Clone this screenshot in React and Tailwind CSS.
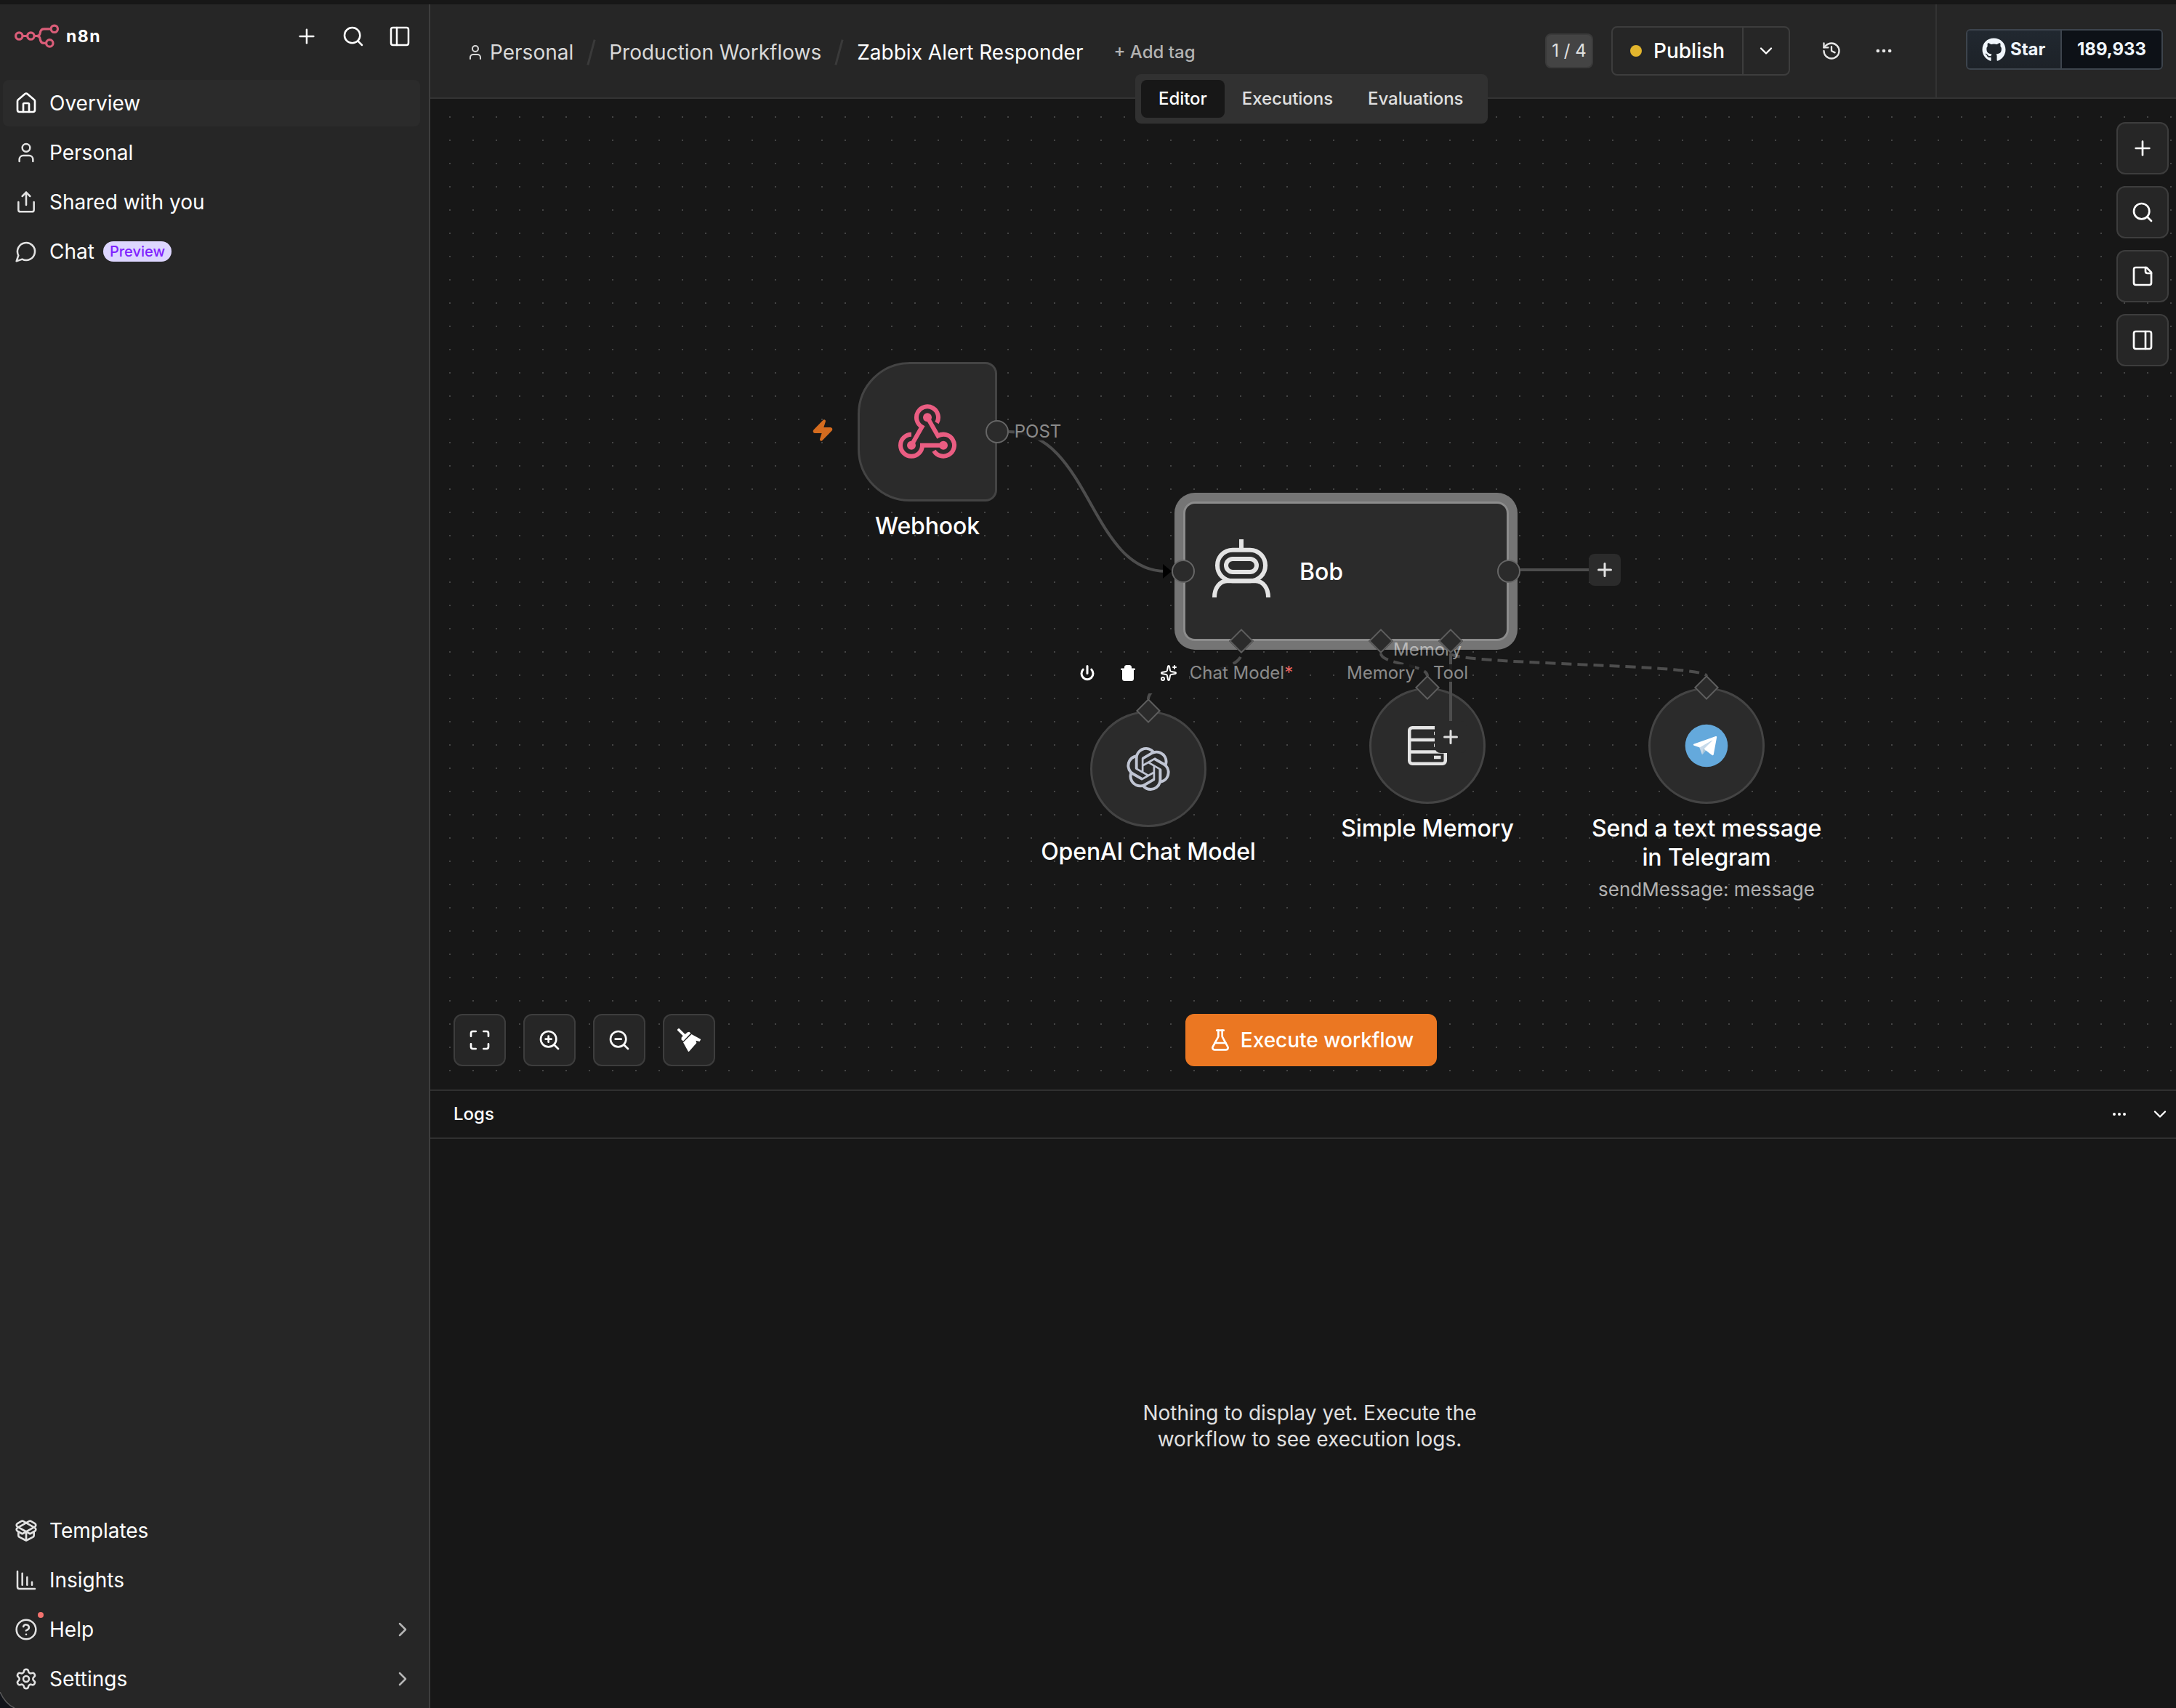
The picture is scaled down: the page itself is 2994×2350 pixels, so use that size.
import React from 'react';
import {
  Plus,
  Search,
  PanelLeft,
  PanelRight,
  House,
  User,
  Share,
  PackageOpen,
  ChartColumnDecreasing,
  CircleQuestionMark,
  Settings,
  ChevronRight,
  ChevronDown,
  History,
  Ellipsis,
  Maximize,
  ZoomIn,
  ZoomOut,
  FlaskConical,
  Sparkles,
} from 'lucide-react';
import { FaGithub } from 'react-icons/fa';
import { SiOpenai } from 'react-icons/si';

function Logo() {
  return (
    <svg width="62" height="34" viewBox="0 0 62 34" fill="none" stroke="#d95d78" strokeWidth="3.2">
      <circle cx="6.3" cy="16.5" r="4.7" />
      <circle cx="22.4" cy="16.5" r="4.7" />
      <circle cx="54.8" cy="6.8" r="4.7" />
      <circle cx="48.3" cy="26.4" r="4.7" />
      <path d="M11 16.5h6.7M27 16.5h3.2c3 0 4.6-1.4 5-4l.4-1.8c.6-2.6 2.4-3.9 5-3.9h9.5M30.2 16.5c3 0 4.6 1.4 5 4l.4 1.9c.6 2.700 2.2 4 4.800 4h3.2" />
    </svg>
  );
}

function MessageCircle() {
  return (
    <svg width="32" height="32" viewBox="0 0 24 24" fill="none" stroke="currentColor" strokeWidth="1.900" strokeLinecap="round" strokeLinejoin="round">
      <path d="M7.900 20A9 9 0 1 0 4 16.100L2 22Z" />
    </svg>
  );
}

function StickyNote() {
  return (
    <svg width="32" height="32" viewBox="0 0 24 24" fill="none" stroke="currentColor" strokeWidth="2" strokeLinecap="round" strokeLinejoin="round">
      <path d="M16 3H5a2 2 0 0 0-2 2v14a2 2 0 0 0 2 2h14a2 2 0 0 0 2-2V8Z" />
      <path d="M15 3v4a2 2 0 0 0 2 2h4" />
    </svg>
  );
}

function Broom() {
  return (
    <svg width="32" height="32" viewBox="0 0 32 32" fill="currentColor">
      <path d="M2 2l8 8" stroke="currentColor" strokeWidth="3.800" strokeLinecap="round" />
      <path d="M14 5.200l2.200-.4 2.300 1.700L8 17.500l-2.600-2.300.4-3.200z" />
      <path d="M19.500 8L31.500 14.500c.7.400.7 1 .3 1.600l-1.300 1.900-5-1.300.9 3.300L16.300 31.600c-.5.600-1.100.5-1.500-.1L8 19.300z" />
    </svg>
  );
}

const primaryNav = [
  { label: 'Overview', icon: <House size={32} strokeWidth={2} />, active: true },
  { label: 'Personal', icon: <User size={32} strokeWidth={1.9} /> },
  { label: 'Shared with you', icon: <Share size={32} strokeWidth={1.9} /> },
  { label: 'Chat', icon: <MessageCircle />, badge: 'Preview' },
];

const secondaryNav = [
  { label: 'Templates', icon: <PackageOpen size={32} strokeWidth={2} /> },
  { label: 'Insights', icon: <ChartColumnDecreasing size={32} strokeWidth={1.9} /> },
  { label: 'Help', icon: <CircleQuestionMark size={32} strokeWidth={1.9} />, dot: true, chevron: true },
  { label: 'Settings', icon: <Settings size={32} strokeWidth={1.9} />, chevron: true },
];

function NavItem({ item }) {
  return (
    <div
      className={
        item.active
          ? 'flex h-16 items-center rounded-lg bg-[#2b2b2b] px-4 text-white'
          : 'flex h-16 items-center rounded-lg px-4 text-[#e2e2e2]'
      }
    >
      <span className="relative">
        {item.icon}
        {item.dot && <span className="absolute -right-2 -top-2 size-2 rounded-full bg-[#f3726e]" />}
      </span>
      <span className="ml-4 text-[28px] text-white">{item.label}</span>
      {item.badge && (
        <span className="ml-3 flex h-7 items-center rounded-full bg-[#ddd6ff] px-[9px] text-[20px] font-medium text-[#7f22fe]">
          {item.badge}
        </span>
      )}
      {item.chevron && <ChevronRight size={32} strokeWidth={1.9} className="-mr-2 ml-auto text-[#b5b5b5]" />}
    </div>
  );
}

function Sidebar() {
  return (
    <aside className="flex w-[592px] shrink-0 flex-col border-r-2 border-[#3d3d3d] bg-[#262626]">
      <div className="flex h-[88px] items-center pl-5 pr-6">
        <Logo />
        <span className="ml-[9px] text-[23px] font-bold tracking-[1.5px] text-white">n8n</span>
        <div className="ml-auto flex items-center gap-8 text-white">
          <Plus size={32} strokeWidth={1.9} />
          <Search size={32} strokeWidth={1.9} />
          <PanelLeft size={32} strokeWidth={1.9} />
        </div>
      </div>
      <nav className="mt-4 flex flex-col gap-1 pl-1 pr-3">
        {primaryNav.map((item) => (
          <NavItem key={item.label} item={item} />
        ))}
      </nav>
      <nav className="mt-auto flex flex-col gap-1 pb-2 pl-1 pr-3">
        {secondaryNav.map((item) => (
          <NavItem key={item.label} item={item} />
        ))}
      </nav>
    </aside>
  );
}

function Slash() {
  return <span className="mx-[23px] h-9 w-[3px] rotate-[15deg] bg-[#3a3a3a]" />;
}

function Header() {
  return (
    <header className="relative z-20 flex h-[130px] shrink-0 border-b-2 border-[#333] bg-[#262626]">
      <div className="flex flex-1 items-center pl-[50px] pr-[57px]">
        <div className="mt-1 flex items-center text-[28px] text-[#d9d9d9]">
          <User size={24} />
          <span className="ml-2">Personal</span>
          <Slash />
          <span>Production Workflows</span>
          <Slash />
          <span className="text-white">Zabbix Alert Responder</span>
          <span className="ml-[42px] text-[24px] font-medium text-[#b3b3b3]">+ Add tag</span>
        </div>
        <div className="ml-auto flex items-center">
          <span className="flex h-12 w-[66px] items-center justify-center rounded-lg border-2 border-[#3a3a3a] bg-[#444] text-[24px] text-[#e0e0e0]">
            1 / 4
          </span>
          <div className="ml-[25px] flex h-[68px] items-center rounded-lg border-2 border-[#3d3d3d] text-white">
            <div className="flex h-full w-[180px] items-center border-r-2 border-[#3d3d3d] pl-6">
              <span className="size-4 rounded-full bg-[#e2b52d]" />
              <span className="ml-4 text-[28px] font-medium">Publish</span>
            </div>
            <div className="flex w-[62px] justify-center">
              <ChevronDown size={28} />
            </div>
          </div>
          <History size={28} strokeWidth={2} className="ml-[43px] text-[#e6e6e6]" />
          <Ellipsis size={28} className="ml-[44px] text-[#e6e6e6]" />
        </div>
      </div>
      <div className="flex w-[331px] shrink-0 items-center border-l-2 border-[#333] pb-1 pl-10">
        <div className="flex h-14 w-[271px] overflow-hidden rounded-md border-2 border-[#3d444d] font-bold text-[#f0f6fc]">
          <div className="flex w-[130px] items-center border-r-2 border-[#3d444d] bg-gradient-to-b from-[#212830] to-[#1d2228] pl-5 text-[24px]">
            <FaGithub size={33} />
            <span className="ml-1.5">Star</span>
          </div>
          <div className="flex flex-1 items-center justify-center bg-[#0d1117] text-[24px]">189,933</div>
        </div>
      </div>
      <div className="absolute left-[970px] top-[96px] flex h-[68px] w-[485px] items-center rounded-lg bg-[#313131] p-2 text-[24px] font-medium tracking-[-0.05px] text-[#e0e0e0]">
        <span className="flex h-[52px] items-center rounded-lg bg-[#171717] px-6 text-white">Editor</span>
        <span className="px-6">Executions</span>
        <span className="px-6">Evaluations</span>
      </div>
    </header>
  );
}

function DotGrid() {
  return (
    <svg className="absolute left-0 top-0" width="2994" height="2350" viewBox="0 0 2994 2350" fill="none">
      <defs>
        <pattern id="dots" x="618" y="160" width="32" height="32" patternUnits="userSpaceOnUse">
          <rect width="2" height="2" fill="#444" />
        </pattern>
      </defs>
      <rect x="592" y="136" width="2402" height="1363" fill="url(#dots)" />
    </svg>
  );
}

function Wires() {
  return (
    <svg className="absolute left-0 top-0" width="2994" height="2350" viewBox="0 0 2994 2350" fill="none" stroke="#4d4d4d" strokeWidth="4">
      <path d="M1388 594C1500 594 1500 786 1604 786" />
      <path d="M1600 776L1612 786L1600 796Z" fill="#000" stroke="none" />
      <path d="M1708 899C1708 930 1580 930 1580 962" strokeDasharray="14 8" strokeDashoffset="17" />
      <path d="M1900 899C1900 914 1964 914 1964 930" strokeDasharray="14 8" />
      <path d="M1996 899C1996 914 2348 914 2348 930" strokeDasharray="14 8" />
    </svg>
  );
}

function Diamond({ className }) {
  return (
    <span className={`absolute size-6 -translate-x-1/2 -translate-y-1/2 rotate-45 border-2 border-[#5e5e5e] bg-[#2b2b2b] ${className}`} />
  );
}

function Port({ className }) {
  return (
    <span className={`absolute size-8 -translate-x-1/2 -translate-y-1/2 rounded-full border-2 border-[#666] bg-[#2b2b2b] ${className}`} />
  );
}

function Title({ className, children }) {
  return (
    <div className={`absolute -translate-x-1/2 whitespace-nowrap text-center text-[32px] font-medium leading-[40px] tracking-[-0.13px] text-white ${className}`}>
      {children}
    </div>
  );
}

function PortLabel({ className, children }) {
  return (
    <div className={`absolute -translate-x-1/2 whitespace-nowrap text-[24px] leading-[24px] text-white/50 ${className}`}>
      {children}
    </div>
  );
}

function AddButton({ className }) {
  return (
    <span className={`absolute flex size-11 items-center justify-center rounded-lg bg-[#2b2b2b] text-[#e0e0e0] ${className}`}>
      <svg width="20" height="20" viewBox="0 0 20 20" stroke="currentColor" strokeWidth="3" strokeLinecap="round">
        <path d="M10 1.500v17M1.500 10h17" />
      </svg>
    </span>
  );
}

function WebhookIcon() {
  return (
    <svg className="-mt-[2px]" width="80" height="75" viewBox="438 256 240 225" fill="none" stroke="#ea5d82" strokeWidth="18">
      <path d="M597 333.500A45 45 0 1 0 535.500 350L492 426" />
      <path d="M492 381A45 45 0 1 0 537 426H624" />
      <path d="M585 448.500A45 45 0 1 0 601.500 387L558 311" />
      <g fill="#ea5d82" stroke="none">
        <circle cx="558" cy="311" r="18" />
        <circle cx="492" cy="426" r="18" />
        <circle cx="624" cy="426" r="18" />
      </g>
    </svg>
  );
}

function RobotIcon() {
  return (
    <svg className="-mt-2" width="80" height="80" viewBox="0 0 80 80" fill="none" stroke="#e4e4e4" strokeWidth="6">
      <path d="M40 0v13" />
      <rect x="7" y="14.700" width="66" height="42.600" rx="21" />
      <rect x="19" y="27" width="42" height="18" rx="9" />
      <path d="M3 80C3 67 10 58 20 57.300H60C70 58 77 67 77 80" />
    </svg>
  );
}

function MemoryIcon() {
  return (
    <svg width="54" height="54" viewBox="0 0 54 54" fill="none" stroke="#e4e4e4" strokeWidth="4.500">
      <rect x="2.250" y="2.250" width="49.500" height="49.500" rx="4" />
      <path d="M2 19h50M2 35.500h50" />
      <path d="M36 10h9.500M36 26.500h9.500M36 43h9.500" />
    </svg>
  );
}

function TelegramIcon() {
  return (
    <svg width="60" height="60" viewBox="0 0 60 60">
      <circle cx="30" cy="30" r="29.300" fill="#64a9dc" />
      <path d="M20.300 32.500L24 42.300L30 35.500L40 22z" fill="#c8daea" />
      <path d="M24 42.300L29 35.800L26 33.500z" fill="#a9c6d8" />
      <path d="M12.900 27.600L42.600 17.100c1.100-.4 1.800.2 1.500 1.500L39.800 42c-.3 1.300-1.100 1.600-2.200.9L26.500 34.500L38.500 22.500L20.800 32.500L12.800 29.700c-1.200-.5-1.200-1.600.1-2.100z" fill="#fff" />
    </svg>
  );
}

function NodeToolbar() {
  return (
    <div className="absolute left-[1468px] top-[898px] flex h-14 w-[168px] items-center justify-around bg-[#171717] text-white">
      <svg width="24" height="24" viewBox="0 0 24 24" fill="none" stroke="currentColor" strokeWidth="3" strokeLinecap="round">
        <path d="M12 2.500v10M17.800 7.200a8 8 0 1 1-11.600 0" />
      </svg>
      <svg width="24" height="24" viewBox="0 0 24 24" fill="currentColor">
        <path d="M7 3.500C7.300 2 8.500 1 10 1h4c1.500 0 2.700 1 3 2.500V6H7z" />
        <rect x="2" y="5.500" width="20" height="2.400" rx="1.200" />
        <path d="M4 7h16v12.500a3.500 3.500 0 0 1-3.500 3.500h-9A3.500 3.500 0 0 1 4 19.500z" />
      </svg>
      <Sparkles size={24} />
    </div>
  );
}

function ToolButton({ children }) {
  return (
    <span className="flex size-[72px] items-center justify-center rounded-xl border-2 border-[#3d3d3d] bg-[#262626] text-white">
      {children}
    </span>
  );
}

const circleNode =
  'absolute flex size-40 -translate-x-1/2 -translate-y-1/2 items-center justify-center rounded-full border-[3px] border-[#444] bg-[#2b2b2b]';

function Canvas() {
  return (
    <section className="relative h-[1363px] shrink-0 overflow-hidden bg-[#171717]">
      {/* Free canvas: items are placed in page coordinates */}
      <div className="absolute -left-[592px] -top-[136px] h-[2350px] w-[2994px]">
        <DotGrid />
        <Wires />

        <svg className="absolute left-[1116px] top-[576px] text-[#d56c1f]" width="32" height="32" viewBox="0 0 24 24" fill="currentColor" stroke="currentColor" strokeWidth="2" strokeLinejoin="round">
          <path d="M4 14a1 1 0 0 1-.78-1.630l9.900-10.200a.5.5 0 0 1 .86.460l-1.920 6.020A1 1 0 0 0 13 10h7a1 1 0 0 1 .78 1.630l-9.900 10.200a.5.5 0 0 1-.86-.460l1.920-6.020A1 1 0 0 0 11 14z" />
        </svg>
        <div className="absolute left-[1180px] top-[498px] flex size-48 items-center justify-center rounded-l-[72px] rounded-r-2xl border-[3px] border-[#444] bg-[#2b2b2b]">
          <WebhookIcon />
        </div>
        <PortLabel className="left-[1428px] top-[582px] bg-[#171717]/85">POST</PortLabel>
        <Port className="left-[1372px] top-[594px]" />
        <Title className="left-[1276px] top-[704px]">Webhook</Title>

        <div className={`${circleNode} left-[1580px] top-[1058px]`}>
          <SiOpenai size={60} color="#c0c5d3" />
        </div>
        <Title className="left-[1580px] top-[1152px]">OpenAI Chat Model</Title>

        <div className={`${circleNode} left-[1964px] top-[1026px]`}>
          <MemoryIcon />
        </div>
        <Title className="left-[1964px] top-[1120px]">Simple Memory</Title>

        <div className={`${circleNode} left-[2348px] top-[1026px]`}>
          <TelegramIcon />
        </div>
        <Title className="left-[2348px] top-[1120px]">
          Send a text message
          <br />
          in Telegram
        </Title>
        <div className="absolute left-[2348px] top-[1204px] -translate-x-1/2 whitespace-nowrap text-[26px] leading-[40px] text-[#b0b0b0]">
          sendMessage: message
        </div>

        <div className="absolute left-[1628px] top-[690px] flex h-48 w-[448px] items-center rounded-2xl border-[3px] border-[#8c8c8c] bg-[#2b2b2b] pl-[37px] shadow-[0_0_0_12px_#757575]">
          <RobotIcon />
          <span className="ml-10 mt-0.5 text-[32px] font-medium text-white">Bob</span>
        </div>
        <Port className="left-[1628px] top-[786px]" />
        <span className="absolute left-[2092px] top-[782px] h-1 w-[94px] bg-[#4d4d4d]" />
        <Port className="left-[2076px] top-[786px]" />
        <AddButton className="left-[2186px] top-[762px]" />

        <PortLabel className="left-[1964px] top-[882px]">Memory</PortLabel>
        <span className="absolute left-[1994px] top-[899px] h-[93px] w-1 bg-[#4d4d4d]" />
        <AddButton className="left-[1974px] top-[992px]" />
        <Diamond className="left-[1708px] top-[882px]" />
        <Diamond className="left-[1900px] top-[882px]" />
        <Diamond className="left-[1996px] top-[882px]" />
        <NodeToolbar />
        <PortLabel className="left-[1708px] top-[914px] bg-[#171717]/85">
          Chat Model<span className="text-[#e8655f]">*</span>
        </PortLabel>
        <PortLabel className="left-[1900px] top-[914px] bg-[#171717]/85">Memory</PortLabel>
        <PortLabel className="left-[1996px] top-[914px] bg-[#171717]/85">Tool</PortLabel>
        <Diamond className="left-[1580px] top-[978px]" />
        <Diamond className="left-[1964px] top-[946px]" />
        <Diamond className="left-[2348px] top-[946px]" />
      </div>

      {/* Floating canvas controls */}
      <div className="absolute right-[10px] top-8 flex flex-col gap-4">
        <ToolButton><Plus size={32} /></ToolButton>
        <ToolButton><Search size={32} /></ToolButton>
        <ToolButton><StickyNote /></ToolButton>
        <ToolButton><PanelRight size={32} /></ToolButton>
      </div>
      <div className="absolute bottom-8 left-8 flex gap-6">
        <ToolButton><Maximize size={32} /></ToolButton>
        <ToolButton><ZoomIn size={32} /></ToolButton>
        <ToolButton><ZoomOut size={32} /></ToolButton>
        <ToolButton><Broom /></ToolButton>
      </div>
      <div className="absolute bottom-8 left-[1039px] flex h-[72px] w-[346px] items-center justify-center gap-3 rounded-xl bg-[#eb7722] text-[28px] font-medium text-white">
        <FlaskConical size={32} />
        <span>Execute workflow</span>
      </div>
    </section>
  );
}

function Logs() {
  return (
    <section className="flex flex-1 flex-col border-t-2 border-[#303030] bg-[#171717]">
      <div className="flex h-16 items-center pl-8 pr-2">
        <span className="text-[24px] font-medium text-white">Logs</span>
        <div className="ml-auto flex items-center gap-[30px] text-white">
          <Ellipsis size={24} />
          <ChevronDown size={28} />
        </div>
      </div>
      <div className="flex flex-1 items-center justify-center border-t-2 border-[#303030] pl-[18px] pt-1.5">
        <p className="w-[480px] text-center text-[28px] leading-[36px] text-[#e0e0e0]">
          Nothing to display yet. Execute the workflow to see execution logs.
        </p>
      </div>
    </section>
  );
}

export default function App() {
  return (
    <div className="relative flex h-[2350px] w-[2994px] flex-col overflow-hidden bg-[#171717] pt-1.5 font-['Inter',sans-serif] leading-none">
      <div className="flex min-h-0 flex-1">
        <Sidebar />
        <main className="flex min-w-0 flex-1 flex-col">
          <Header />
          <Canvas />
          <Logs />
        </main>
      </div>
      {/* Rounded window corner */}
      <svg className="absolute bottom-0 left-0" width="22" height="22" viewBox="0 0 22 22">
        <path d="M0 0C4 9 11 18 20 22H0Z" fill="#12141a" />
        <path d="M0 0C4 9 11 18 20 22" fill="none" stroke="#5a5a5a" strokeWidth="1.500" />
      </svg>
    </div>
  );
}
